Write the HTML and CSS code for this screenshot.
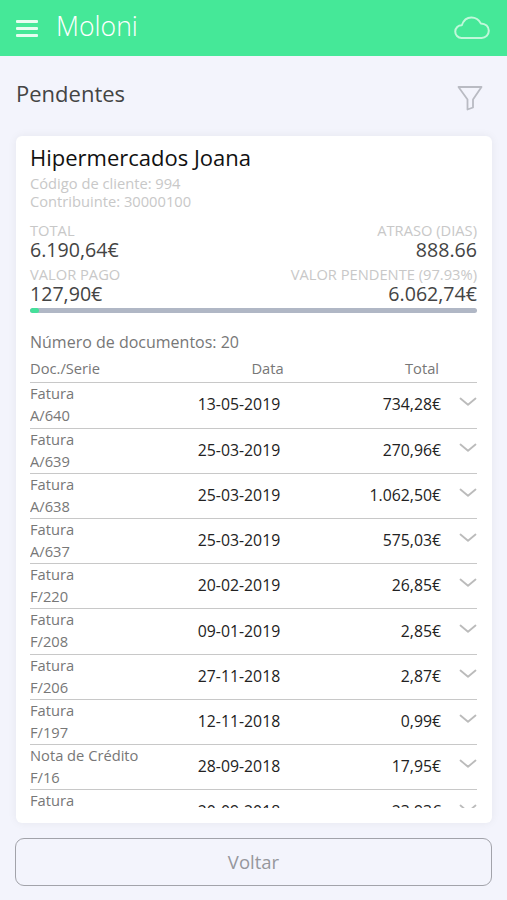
FILE: index.html
```html
<!DOCTYPE html>
<html lang="pt">

<head>
    <meta charset="UTF-8">
    <meta name="viewport" content="width=device-width, initial-scale=1.0">
    <title>Moloni - Pendentes</title>
    <link rel="stylesheet" href="styles.css">
</head>

<body>
    <svg class="display-none">
        <symbol id="chevron" viewBox="0 0 18 10">
            <path d="M1.5 1.5 L9 7.8 L16.5 1.5" />
        </symbol>
    </svg>

    <header class="topBar">
        <div class="menu">
            <span></span>
            <span></span>
            <span></span>
        </div>
        <h1>Moloni</h1>
        <svg class="cloud" viewBox="0 0 36 24">
            <path d="M7.5 22 A6.4 6.4 0 0 1 7.8 9.2 C9.5 4.2 13 1.4 17.4 1.4 C21.8 1.4 25 3.8 26.8 7.4 C31.6 7.6 34.8 10.6 34.8 14.8 C34.8 18.8 31.6 22 27.6 22 Z" />
        </svg>
    </header>

    <div class="pageTitle">
        <h2>Pendentes</h2>
        <svg class="filter" viewBox="0 0 26 27">
            <path d="M1.5 2 H24.5 L16 14.5 V22.5 L10.5 24.5 V14.5 Z" />
        </svg>
    </div>

    <main class="card">
        <h3>Hipermercados Joana</h3>
        <p class="info">Código de cliente: 994</p>
        <p class="info">Contribuinte: 30000100</p>

        <div class="values">
            <div>
                <p class="label">TOTAL</p>
                <p class="value">6.190,64€</p>
            </div>
            <div class="right">
                <p class="label">ATRASO (DIAS)</p>
                <p class="value">888.66</p>
            </div>
            <div>
                <p class="label">VALOR PAGO</p>
                <p class="value">127,90€</p>
            </div>
            <div class="right">
                <p class="label">VALOR PENDENTE (97.93%)</p>
                <p class="value">6.062,74€</p>
            </div>
        </div>
        <div class="progress">
            <div class="paid" style="width: 2.07%"></div>
        </div>

        <p class="count">Número de documentos: 20</p>
        <div class="row tableHeader">
            <span>Doc./Serie</span>
            <span class="date">Data</span>
            <span class="total">Total</span>
        </div>
        <div class="documents">
            <div class="row">
                <div class="doc">Fatura<br>A/640</div>
                <span class="date">13-05-2019</span>
                <span class="total">734,28€</span>
                <svg class="arrow"><use href="#chevron" /></svg>
            </div>
            <div class="row">
                <div class="doc">Fatura<br>A/639</div>
                <span class="date">25-03-2019</span>
                <span class="total">270,96€</span>
                <svg class="arrow"><use href="#chevron" /></svg>
            </div>
            <div class="row">
                <div class="doc">Fatura<br>A/638</div>
                <span class="date">25-03-2019</span>
                <span class="total">1.062,50€</span>
                <svg class="arrow"><use href="#chevron" /></svg>
            </div>
            <div class="row">
                <div class="doc">Fatura<br>A/637</div>
                <span class="date">25-03-2019</span>
                <span class="total">575,03€</span>
                <svg class="arrow"><use href="#chevron" /></svg>
            </div>
            <div class="row">
                <div class="doc">Fatura<br>F/220</div>
                <span class="date">20-02-2019</span>
                <span class="total">26,85€</span>
                <svg class="arrow"><use href="#chevron" /></svg>
            </div>
            <div class="row">
                <div class="doc">Fatura<br>F/208</div>
                <span class="date">09-01-2019</span>
                <span class="total">2,85€</span>
                <svg class="arrow"><use href="#chevron" /></svg>
            </div>
            <div class="row">
                <div class="doc">Fatura<br>F/206</div>
                <span class="date">27-11-2018</span>
                <span class="total">2,87€</span>
                <svg class="arrow"><use href="#chevron" /></svg>
            </div>
            <div class="row">
                <div class="doc">Fatura<br>F/197</div>
                <span class="date">12-11-2018</span>
                <span class="total">0,99€</span>
                <svg class="arrow"><use href="#chevron" /></svg>
            </div>
            <div class="row">
                <div class="doc">Nota de Crédito<br>F/16</div>
                <span class="date">28-09-2018</span>
                <span class="total">17,95€</span>
                <svg class="arrow"><use href="#chevron" /></svg>
            </div>
            <div class="row">
                <div class="doc">Fatura</div>
                <span class="date">20-09-2018</span>
                <span class="total">23,93€</span>
                <svg class="arrow"><use href="#chevron" /></svg>
            </div>
        </div>
    </main>

    <button class="back">Voltar</button>
</body>

</html>
```
FILE: styles.css
```css
* {
    margin: 0;
    padding: 0;
    box-sizing: border-box;
    font-family: 'Open Sans', 'Noto Sans', sans-serif;
}

body {
    height: 900px;
    background-color: #f3f4fc;
    color: #444;
    overflow: hidden;
}

svg {
    fill: none;
    stroke-linecap: round;
    stroke-linejoin: round;
}

.display-none {
    display: none;
}

.topBar {
    display: flex;
    align-items: center;
    height: 56px;
    padding: 0 17px 0 16px;
    background-color: #45e898;
}

.topBar .menu {
    display: flex;
    flex-direction: column;
    gap: 4px;
    width: 22px;
    margin-top: 1px;
}

.topBar .menu span {
    height: 3px;
    border-radius: 1px;
    background-color: #e6fdf0;
}

.topBar h1 {
    flex: 1;
    margin-left: 18px;
    font-size: 26.6px;
    font-weight: 300;
    line-height: 34px;
    padding-bottom: 5px;
    color: #fff;
}

.topBar .cloud {
    width: 36px;
    height: 24px;
    stroke: #c0f8da;
    stroke-width: 2;
}

.pageTitle {
    display: flex;
    justify-content: space-between;
    height: 79.5px;
    padding: 23px 24px 0 16px;
}

.pageTitle h2 {
    font-size: 22px;
    font-weight: 400;
    line-height: 29px;
}

.pageTitle .filter {
    width: 26px;
    height: 27px;
    margin-top: 6px;
    stroke: #b9bbc3;
    stroke-width: 1.8;
}

.card {
    height: 687.5px;
    margin: 0 15px 0 16px;
    padding: 6px 15px 0 14px;
    border-radius: 6px;
    background-color: #fff;
    box-shadow: 0 0 10px rgba(0, 0, 0, 0.06);
}

.card h3 {
    font-size: 22px;
    font-weight: 400;
    line-height: 30px;
    padding-bottom: 2px;
    color: #111;
}

.card .info {
    font-size: 14.7px;
    line-height: 18.4px;
    color: #c8c8c8;
}

.values {
    display: grid;
    grid-template-columns: 1fr 2fr;
    row-gap: 3px;
    margin-top: 11px;
}

.values .right {
    text-align: right;
}

.values .label {
    font-size: 14.7px;
    line-height: 18px;
    padding-bottom: 1px;
    color: #c8c8c8;
}

.values .value {
    font-size: 19.6px;
    line-height: 20px;
    padding-bottom: 2px;
}

.progress {
    height: 5px;
    margin-top: 2px;
    border-radius: 3px;
    background-color: #b0b7c5;
    overflow: hidden;
}

.progress .paid {
    height: 100%;
    border-radius: 3px;
    background-color: #45e09a;
}

.count {
    margin-top: 18px;
    font-size: 16px;
    line-height: 22px;
    color: #777;
}

.row {
    display: grid;
    grid-template-columns: 128px 162px 1fr 36px;
    align-items: center;
    height: 45.22px;
    border-bottom: 1.5px solid #c8c8c8;
    font-size: 15.8px;
    color: #222;
}

.row .doc {
    height: 44px;
    padding-bottom: 2px;
    line-height: 22px;
    font-size: 14.7px;
    color: #777;
    align-self: start;
    margin-top: -1px;
}

.row .date {
    padding-bottom: 2px;
    text-align: center;
}

.row .total {
    padding-bottom: 2px;
    text-align: right;
}

.row .arrow {
    width: 18px;
    height: 10px;
    margin-left: auto;
    margin-bottom: 6px;
    stroke: #bbb;
    stroke-width: 1.8;
}

.tableHeader {
    height: 30px;
    font-size: 14.7px;
    color: #777;
}

.tableHeader .date {
    padding: 0 0 0 57px;
}

.tableHeader .total {
    padding: 0 2px 0 0;
}

.documents {
    height: 424.5px;
    overflow: hidden;
}

.back {
    display: block;
    width: 477px;
    height: 48px;
    margin: 15px 0 0 15px;
    padding-bottom: 2px;
    border: 1.5px solid #a2a3aa;
    border-radius: 9px;
    background-color: transparent;
    font-size: 18.5px;
    color: #96979c;
}
```
